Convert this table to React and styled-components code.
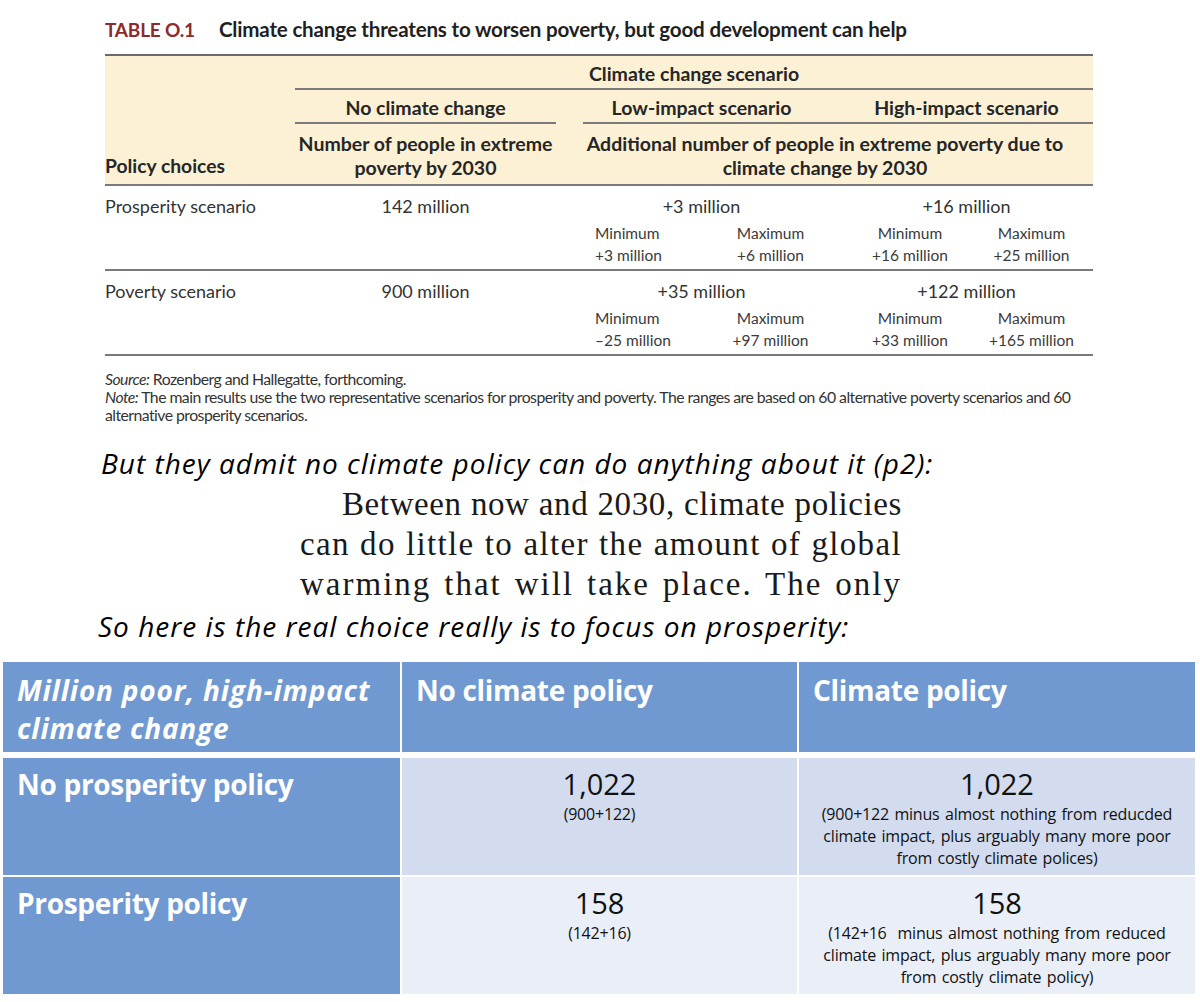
import styled, { createGlobalStyle } from "styled-components";

const GlobalStyle = createGlobalStyle`
  body {
    margin: 0;
    background: #ffffff;
  }
`;

const scenarioRows = [
  {
    name: "Prosperity scenario",
    base: "142 million",
    low: "+3 million",
    high: "+16 million",
    ranges: ["+3 million", "+6 million", "+16 million", "+25 million"],
  },
  {
    name: "Poverty scenario",
    base: "900 million",
    low: "+35 million",
    high: "+122 million",
    ranges: ["\u201325 million", "+97 million", "+33 million", "+165 million"],
  },
];

// justified book quote; tracking per line so the glyphs fill like the scan
const quoteLines = [
  { text: "Between now and 2030, climate policies", indent: 42, track: 0.6 },
  { text: "can do little to alter the amount of global", indent: 0, track: 1.35 },
  { text: "warming that will take place. The only", indent: 0, track: 2 },
];

const policyRows = [
  {
    label: "No prosperity policy",
    tone: "dark",
    plain: { value: "1,022", note: ["(900+122)"] },
    policy: {
      value: "1,022",
      note: [
        "(900+122 minus almost nothing from reducded",
        "climate impact, plus arguably many more poor",
        "from costly climate polices)",
      ],
    },
  },
  {
    label: "Prosperity policy",
    tone: "light",
    plain: { value: "158", note: ["(142+16)"] },
    policy: {
      value: "158",
      note: [
        "(142+16\u00a0 minus almost nothing from reduced",
        "climate impact, plus arguably many more poor",
        "from costly climate policy)",
      ],
    },
  },
];

export default function App() {
  return (
    <Page>
      <GlobalStyle />
      <Report>
        <TableTitle>
          <TableNumber>TABLE O.1</TableNumber>
          Climate change threatens to worsen poverty, but good development can help
        </TableTitle>

        <HeaderGrid>
          <PolicyHead>Policy choices</PolicyHead>
          <HeadCell $span="2 / 8" $rule>
            Climate change scenario
          </HeadCell>
          <HeadCell $span="2 / 3" $rule>
            No climate change
          </HeadCell>
          <HeadCell $span="4 / 6" $rule $shift={20}>
            Low-impact scenario
          </HeadCell>
          <HeadCell $span="6 / 8" $rule>
            High-impact scenario
          </HeadCell>
          <HeadCell $span="2 / 3" $tall>
            Number of people in extreme
            <br />
            poverty by 2030
          </HeadCell>
          <HeadCell $span="4 / 8" $tall $shift={26}>
            Additional number of people in extreme poverty due to
            <br />
            climate change by 2030
          </HeadCell>
        </HeaderGrid>

        {scenarioRows.map((row) => (
          <BodyGrid key={row.name}>
            <RowName>{row.name}</RowName>
            <MainValue $span="2 / 3">{row.base}</MainValue>
            <MainValue $span="4 / 6" $shift={20}>
              {row.low}
            </MainValue>
            <MainValue $span="6 / 8">{row.high}</MainValue>
            <RangeCell $col={4} $align="left">
              Minimum
              <br />
              {row.ranges[0]}
            </RangeCell>
            <RangeCell $col={5}>
              Maximum
              <br />
              {row.ranges[1]}
            </RangeCell>
            <RangeCell $col={6}>
              Minimum
              <br />
              {row.ranges[2]}
            </RangeCell>
            <RangeCell $col={7} $shift={10}>
              Maximum
              <br />
              {row.ranges[3]}
            </RangeCell>
          </BodyGrid>
        ))}

        <Notes>
          <p>
            <em>Source:</em> Rozenberg and Hallegatte, forthcoming.
          </p>
          <p>
            <em>Note:</em> The main results use the two representative scenarios for prosperity and
            poverty. The ranges are based on 60 alternative poverty scenarios and 60
            <br />
            alternative prosperity scenarios.
          </p>
        </Notes>
      </Report>

      <Remark $indent={101} $gap={19}>
        But they admit no climate policy can do anything about it (p2):
      </Remark>
      <Quote>
        {quoteLines.map((line) => (
          <QuoteLine key={line.text} $indent={line.indent} $track={line.track}>
            {line.text}
          </QuoteLine>
        ))}
      </Quote>
      <Remark $indent={98} $gap={2}>
        So here is the real choice really is to focus on prosperity:
      </Remark>

      <ChoiceTable>
        <ChoiceHead>
          <em>Million poor, high-impact climate change</em>
        </ChoiceHead>
        <ChoiceHead>No climate policy</ChoiceHead>
        <ChoiceHead>Climate policy</ChoiceHead>
        {policyRows.map((row) => (
          <ChoiceRow key={row.label}>
            <ChoiceLabel>{row.label}</ChoiceLabel>
            <ChoiceCell $tone={row.tone}>
              <Big>{row.plain.value}</Big>
              {row.plain.note.map((line) => (
                <Small key={line}>{line}</Small>
              ))}
            </ChoiceCell>
            <ChoiceCell $tone={row.tone}>
              <Big>{row.policy.value}</Big>
              {row.policy.note.map((line) => (
                <Small key={line}>{line}</Small>
              ))}
            </ChoiceCell>
          </ChoiceRow>
        ))}
      </ChoiceTable>
    </Page>
  );
}

const Page = styled.div`
  width: 1200px;
  height: 1002px;
  overflow: hidden;
  display: flex;
  flex-direction: column;
`;

const Report = styled.section`
  width: 988px;
  margin-left: 105px;
  font-family: Lato, "Liberation Sans", sans-serif;
  color: #2b2b2b;
`;

const TableTitle = styled.h2`
  margin: 17px 0 12px;
  font-size: 20.6px;
  line-height: 24px;
  font-weight: 700;
  letter-spacing: -0.2px;
  color: #1f1f1f;
  white-space: nowrap;
`;

const TableNumber = styled.span`
  display: inline-block;
  margin-right: 24px;
  font-size: 19px;
  color: #8f2a2c;
`;

const columns = "190px 261px 27px 118px 139px 140px 113px";

const HeaderGrid = styled.div`
  display: grid;
  grid-template-columns: ${columns};
  background: #fcf1d5;
  border-top: 2px solid #6b6b6b;
  border-bottom: 2px solid #7a7a7a;
`;

const PolicyHead = styled.div`
  grid-column: 1 / 2;
  grid-row: 1 / 4;
  align-self: end;
  padding: 0 0 6px 0;
  font-size: 19.3px;
  line-height: 24px;
  font-weight: 700;
  color: #262626;
`;

const HeadCell = styled.div`
  grid-column: ${(p) => p.$span};
  text-align: center;
  font-size: 19.5px;
  font-weight: 700;
  color: #262626;
  line-height: ${(p) => (p.$tall ? "24px" : "22px")};
  padding: ${(p) => (p.$tall ? "8px 0 4px" : "7px 0 3px")};
  padding-right: ${(p) => p.$shift || 0}px;
  border-bottom: ${(p) => (p.$rule ? "2px solid #7a7a7a" : "none")};
`;

const BodyGrid = styled.div`
  display: grid;
  grid-template-columns: ${columns};
  padding: 9px 0 3px;
  border-bottom: 2px solid #7a7a7a;
  font-weight: 400;
  color: #333;
`;

const RowName = styled.div`
  grid-column: 1 / 2;
  font-size: 18px;
  line-height: 22px;
`;

const MainValue = styled.div`
  grid-column: ${(p) => p.$span};
  grid-row: 1;
  text-align: center;
  font-size: 18px;
  line-height: 22px;
  padding-right: ${(p) => p.$shift || 0}px;
`;

const RangeCell = styled.div`
  grid-column: ${(p) => p.$col};
  grid-row: 2;
  margin-top: 5px;
  text-align: ${(p) => (p.$align === "left" ? "left" : "center")};
  padding-left: ${(p) => (p.$align === "left" ? "12px" : "0")};
  padding-right: ${(p) => p.$shift || 0}px;
  font-size: 15.5px;
  line-height: 22px;
  color: #3a3a3a;
`;

const Notes = styled.div`
  margin-top: 14px;
  font-size: 15.8px;
  line-height: 18px;
  letter-spacing: -0.55px;
  color: #333;

  p {
    margin: 0;
  }
`;

const Remark = styled.p`
  margin: ${(p) => p.$gap}px 0 0;
  padding-left: ${(p) => p.$indent}px;
  font-family: "Open Sans", "Liberation Sans", sans-serif;
  font-style: italic;
  font-size: 28px;
  line-height: 40px;
  letter-spacing: 1px;
  color: #000;
  white-space: nowrap;
`;

const Quote = styled.blockquote`
  margin: 1px 0 0 300px;
  width: 602px;
  font-family: "Liberation Serif", "DejaVu Serif", serif;
  font-size: 33px;
  line-height: 40px;
  color: #1a1a1a;
`;

const QuoteLine = styled.div`
  padding-left: ${(p) => p.$indent}px;
  letter-spacing: ${(p) => p.$track}px;
  text-align: justify;
  text-align-last: justify;
  white-space: nowrap;
`;

const ChoiceTable = styled.div`
  margin: 16px 0 0 3px;
  width: 1192px;
  display: grid;
  grid-template-columns: 397px 395px 396px;
  column-gap: 2px;
  row-gap: 6px;
  font-family: "Open Sans", "Liberation Sans", sans-serif;
`;

const ChoiceHead = styled.div`
  height: 90px;
  box-sizing: border-box;
  padding: 9px 14px 0;
  background: #7099d2;
  color: #ffffff;
  font-size: 28px;
  line-height: 38px;
  font-weight: 700;
  letter-spacing: -0.3px;

  em {
    font-style: italic;
    letter-spacing: 0.8px;
  }
`;

const ChoiceRow = styled.div`
  grid-column: 1 / 4;
  display: grid;
  grid-template-columns: 397px 395px 396px;
  column-gap: 2px;

  & + & {
    margin-top: -4px;
  }
`;

const ChoiceLabel = styled.div`
  height: 117px;
  box-sizing: border-box;
  padding: 7px 14px 0;
  background: #7099d2;
  color: #ffffff;
  font-size: 28px;
  line-height: 38px;
  font-weight: 700;
  letter-spacing: -0.3px;
`;

const ChoiceCell = styled.div`
  padding: 7px 14px 0;
  background: ${(p) => (p.$tone === "dark" ? "#d2dcee" : "#e9eef7")};
  color: #111;
  text-align: center;
`;

const Big = styled.div`
  font-size: 29px;
  line-height: 38px;
`;

const Small = styled.div`
  font-size: 16px;
  line-height: 22px;
  letter-spacing: -0.2px;
  word-spacing: 1.5px;
  white-space: nowrap;
`;
